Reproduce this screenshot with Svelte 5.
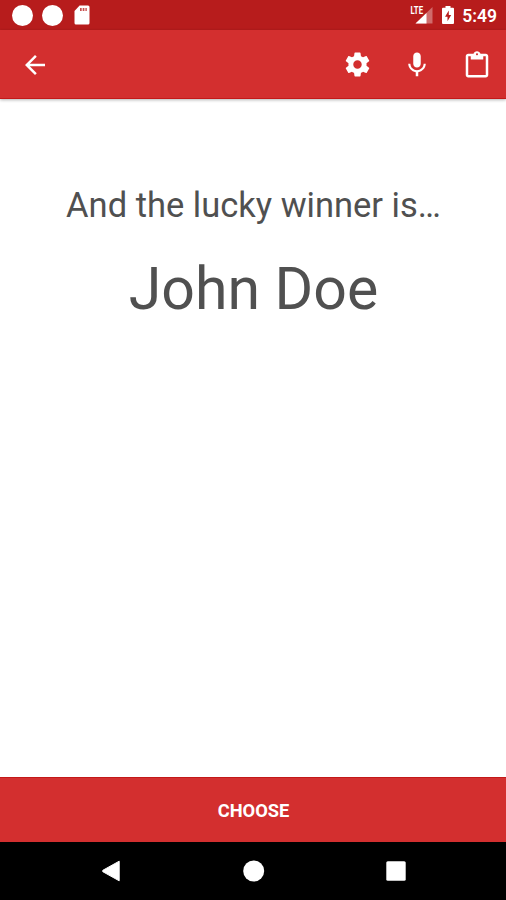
<script>
  let title = 'And the lucky winner is…';
  let names = ['John Doe'];
  let winner = names[0];
  let time = '5:49';

  function choose() {
    winner = names[Math.floor(Math.random() * names.length)];
  }
</script>

<main>
  <div class="status-bar">
    <div class="notifications">
      <span class="dot"></span>
      <span class="dot"></span>
      <svg class="sd-card" viewBox="0 0 16 20" width="16" height="20">
        <path d="M5.6 0.5H14a1.5 1.5 0 0 1 1.5 1.5V18a1.5 1.5 0 0 1-1.5 1.5H2A1.5 1.5 0 0 1 .5 18V6z" fill="#fff" />
        <path d="M6 3h1.7v3H6zM8.7 3h1.7v3H8.7zM11.4 3h1.4v3h-1.4z" fill="#c9504f" />
      </svg>
    </div>
    <div class="system">
      <svg class="signal" viewBox="0 0 24 20" width="24" height="20">
        <path d="M22.500 2V18.500H5.500z" fill="#fff" opacity="0.35" />
        <path d="M16.500 8V18.500H5.500z" fill="#fff" />
        <text x="0.500" y="9" textLength="12.500" lengthAdjust="spacingAndGlyphs">LTE</text>
      </svg>
      <svg class="battery" viewBox="0 0 12 18" width="12" height="18">
        <path d="M3.500 0h5v1.800H11a1 1 0 0 1 1 1V17a1 1 0 0 1-1 1H1a1 1 0 0 1-1-1V2.800a1 1 0 0 1 1-1h2.500z" fill="#fff" />
        <path d="M6.800 4.500L3 10.700h2.500v4.600L9.200 9H6.800z" fill="#b71c1c" />
      </svg>
      <span class="time">{time}</span>
    </div>
  </div>

  <header>
    <button class="icon" aria-label="Back">
      <svg viewBox="0 0 24 24">
        <path d="M20 11H7.830l5.590-5.590L12 4l-8 8 8 8 1.410-1.410L7.830 13H20v-2z" />
      </svg>
    </button>
    <div class="actions">
      <button class="icon settings" aria-label="Settings">
        <svg viewBox="0 0 24 24">
          <path d="M19.430 12.980c.04-.32.07-.64.07-.98s-.03-.66-.07-.98l2.110-1.650c.19-.15.24-.42.12-.64l-2-3.460c-.12-.22-.39-.3-.61-.22l-2.490 1c-.52-.4-1.080-.73-1.690-.98l-.38-2.650C14.460 2.180 14.250 2 14 2h-4c-.25 0-.46.18-.49.42l-.38 2.650c-.61.25-1.170.59-1.690.98l-2.490-1c-.23-.09-.49 0-.61.22l-2 3.460c-.13.22-.07.49.12.64l2.110 1.650c-.04.32-.07.65-.07.98s.03.66.07.98l-2.110 1.650c-.19.15-.24.42-.12.64l2 3.460c.12.22.39.3.61.22l2.490-1c.52.4 1.080.73 1.690.98l.38 2.650c.03.24.24.42.49.42h4c.25 0 .46-.18.49-.42l.38-2.650c.61-.25 1.170-.59 1.690-.98l2.490 1c.23.09.49 0 .61-.22l2-3.460c.12-.22.07-.49-.12-.64l-2.110-1.650zM12 15.500c-1.930 0-3.500-1.570-3.500-3.500s1.570-3.500 3.500-3.500 3.500 1.570 3.500 3.500-1.570 3.500-3.500 3.500z" />
        </svg>
      </button>
      <button class="icon" aria-label="Speak">
        <svg viewBox="0 0 24 24">
          <path d="M12 14c1.660 0 2.990-1.340 2.990-3L15 5c0-1.660-1.340-3-3-3S9 3.340 9 5v6c0 1.660 1.340 3 3 3zm5.300-3c0 3-2.540 5.100-5.300 5.100S6.700 14 6.700 11H5c0 3.410 2.720 6.230 6 6.720V21h2v-3.280c3.280-.48 6-3.300 6-6.720h-1.700z" />
        </svg>
      </button>
      <button class="icon" aria-label="Paste">
        <svg viewBox="0 0 24 24">
          <path d="M19 3h-4.180C14.400 1.840 13.300 1 12 1c-1.300 0-2.400.84-2.820 2H5c-1.100 0-2 .9-2 2v15c0 1.100.9 2 2 2h14c1.100 0 2-.9 2-2V5c0-1.100-.9-2-2-2zm-7-.4c.44 0 .8.36.8.8s-.36.8-.8.8-.8-.36-.8-.8.36-.8.8-.8zM19 20H5V5h2v2.500h10V5h2v15z" />
        </svg>
      </button>
    </div>
  </header>

  <section class="result">
    <h1>{title}</h1>
    <p>{winner}</p>
  </section>

  <button class="choose" on:click={choose}>CHOOSE</button>

  <nav>
    <svg viewBox="0 0 20 22" width="20" height="22">
      <path d="M17.200 1.200V20.800L1 11.800a1 1 0 0 1 0-1.600z" stroke="#fff" stroke-linejoin="round" />
    </svg>
    <svg viewBox="0 0 22 22" width="22" height="22">
      <circle cx="10.700" cy="11" r="10.500" />
    </svg>
    <svg viewBox="0 0 20 20" width="20" height="20">
      <rect x="0.300" y="0.300" width="19.400" height="19.400" rx="1.500" />
    </svg>
  </nav>
</main>

<style>
  :global(body) {
    margin: 0;
    overflow: hidden;
  }

  main {
    display: flex;
    flex-direction: column;
    width: 506px;
    height: 900px;
    background-color: #fff;
    font-family: Roboto, sans-serif;
  }

  button {
    border: none;
    padding: 0;
    cursor: pointer;
  }

  svg {
    display: block;
    fill: #fff;
  }

  .status-bar {
    display: flex;
    justify-content: space-between;
    height: 30px;
    box-sizing: border-box;
    padding: 0 9px 0 12px;
    background-color: #b71c1c;
  }

  .notifications,
  .system {
    display: flex;
    align-items: center;
  }

  .notifications {
    gap: 9px;
  }

  .dot {
    width: 21px;
    height: 21px;
    border-radius: 50%;
    background-color: #fff;
  }

  .sd-card {
    margin-left: 2px;
  }

  .signal {
    margin-right: 8px;
  }

  .signal text {
    font-size: 10.5px;
    font-weight: 700;
    stroke: #b71c1c;
    stroke-width: 1.5px;
    paint-order: stroke;
  }

  .battery {
    margin-right: 8px;
  }

  .time {
    color: #fff;
    font-size: 17.5px;
    font-weight: 600;
    line-height: 30px;
    padding-top: 2px;
  }

  header {
    display: flex;
    align-items: center;
    justify-content: space-between;
    height: 69px;
    box-sizing: border-box;
    padding: 1px 14px 0 20px;
    background-color: #d32f2f;
    border-bottom: 1px solid #c31919;
    box-shadow: 0 1px 3px rgba(0, 0, 0, 0.3);
  }

  .icon {
    width: 30px;
    height: 30px;
    background: none;
  }

  .icon svg {
    width: 30px;
    height: 30px;
  }

  .settings svg {
    width: 29px;
    height: 29px;
    margin-left: 1px;
  }

  .actions {
    display: flex;
    gap: 30px;
  }

  .result {
    flex: 1;
    padding-left: 1px;
    text-align: center;
    color: #505050;
  }

  .result h1 {
    margin: 86px 0 0;
    font-size: 34.5px;
    font-weight: 400;
    line-height: 40px;
  }

  .result p {
    margin: 29px 0 0;
    font-size: 59px;
    line-height: 70px;
  }

  .choose {
    height: 65px;
    padding-left: 1px;
    background-color: #d32f2f;
    border-top: 1px solid #c31919;
    color: #fff;
    font-family: Roboto, sans-serif;
    font-size: 18.3px;
    font-weight: 700;
  }

  nav {
    display: flex;
    align-items: center;
    justify-content: space-between;
    height: 58px;
    box-sizing: border-box;
    padding: 0 100px 0 102px;
    background-color: #000;
  }
</style>
